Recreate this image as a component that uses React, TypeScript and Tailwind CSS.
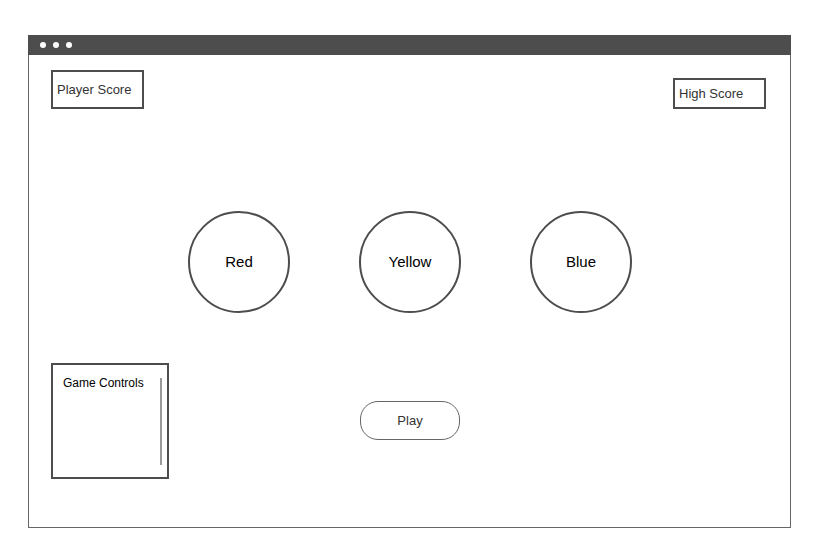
const font = { fontFamily: '"Liberation Sans", Arial, sans-serif' };

function ScoreBox({ label, className }: { label: string; className?: string }) {
  return (
    <div
      className={`flex w-[93px] items-center border-2 border-[#4d4d4d] bg-white pl-[4px] text-[13px] text-[#333] ${className ?? ""}`}
    >
      {label}
    </div>
  );
}

function ColorButton({ label }: { label: string }) {
  return (
    <div className="flex h-[102px] w-[102px] items-center justify-center rounded-full border-2 border-[#4d4d4d] bg-white text-[15px] text-black">
      {label}
    </div>
  );
}

export default function App() {
  return (
    <div className="min-h-[559px] w-[824px] bg-white" style={font}>
      <div className="ml-[28px] pt-[35px]">
        <div className="flex h-[493px] w-[763px] flex-col">
          <div className="flex h-[20px] items-center gap-[7px] bg-[#4d4d4d] pl-[12px]">
            <span className="h-[6px] w-[6px] rounded-full bg-white" />
            <span className="h-[6px] w-[6px] rounded-full bg-white" />
            <span className="h-[6px] w-[6px] rounded-full bg-white" />
          </div>
          <div className="flex flex-1 flex-col border border-t-0 border-[#666] pt-[15px]">
            <div className="flex items-start justify-between pl-[22px] pr-[24px]">
              <ScoreBox label="Player Score" className="h-[39px]" />
              <ScoreBox label="High Score" className="mt-[8px] h-[31px]" />
            </div>
            <div className="mt-[102px] flex gap-[69px] pl-[159px]">
              <ColorButton label="Red" />
              <ColorButton label="Yellow" />
              <ColorButton label="Blue" />
            </div>
            <div className="mt-[50px] flex items-start pl-[22px]">
              <div className="flex h-[116px] w-[118px] justify-between border-2 border-[#4d4d4d] pl-[10px] pr-[5px] pt-[11px]">
                <span className="text-[12px] leading-[14px] text-black">Game Controls</span>
                <div className="mt-[2px] h-[87px] w-[2px] bg-[#999]" />
              </div>
              <button
                type="button"
                className="ml-[191px] mt-[38px] flex h-[39px] w-[100px] items-center justify-center rounded-[18px] border border-[#666] bg-white text-[13px] text-[#333]"
              >
                Play
              </button>
            </div>
          </div>
        </div>
      </div>
    </div>
  );
}
